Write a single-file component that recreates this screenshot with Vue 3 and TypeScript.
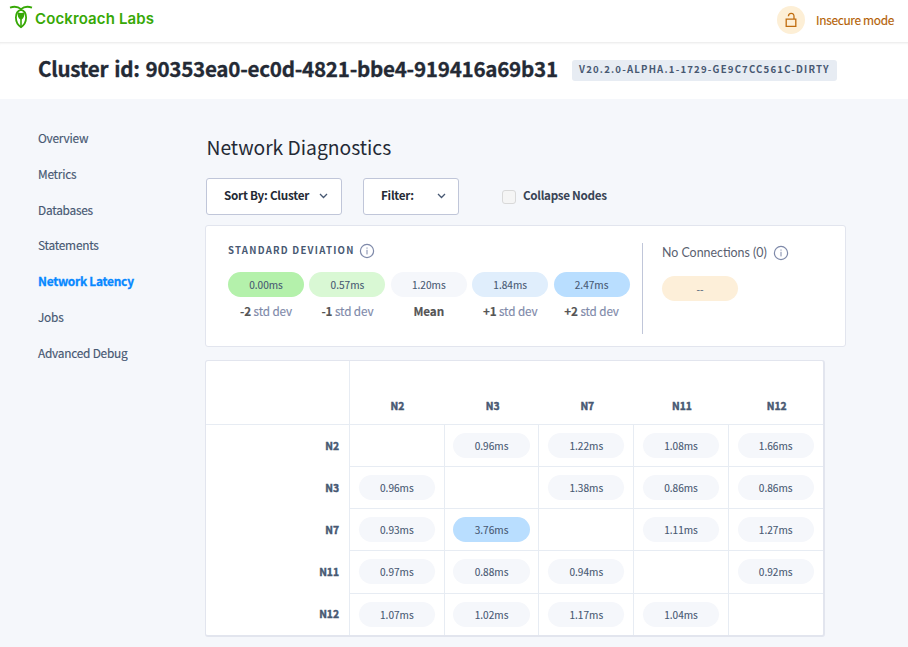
<script setup lang="ts">
interface Deviation {
  value: string
  sign: string
  label: string
  tone: string
}

const navItems: string[] = [
  'Overview',
  'Metrics',
  'Databases',
  'Statements',
  'Network Latency',
  'Jobs',
  'Advanced Debug',
]
const activeItem = 'Network Latency'

const deviations: Deviation[] = [
  { value: '0.00ms', sign: '-2', label: 'std dev', tone: 'green-2' },
  { value: '0.57ms', sign: '-1', label: 'std dev', tone: 'green-1' },
  { value: '1.20ms', sign: 'Mean', label: '', tone: 'neutral' },
  { value: '1.84ms', sign: '+1', label: 'std dev', tone: 'blue-1' },
  { value: '2.47ms', sign: '+2', label: 'std dev', tone: 'blue-2' },
]

const nodes: string[] = ['N2', 'N3', 'N7', 'N11', 'N12']
const latencies: (number | null)[][] = [
  [null, 0.96, 1.22, 1.08, 1.66],
  [0.96, null, 1.38, 0.86, 0.86],
  [0.93, 3.76, null, 1.11, 1.27],
  [0.97, 0.88, 0.94, null, 0.92],
  [1.07, 1.02, 1.17, 1.04, null],
]

const tone = (ms: number): string => (ms > 2.47 ? 'blue-2' : 'neutral')
</script>

<template>
  <div class="page">
    <header class="topbar">
      <div class="brand">
        <svg class="roach" width="24" height="24" viewBox="0 0 24 24" fill="none">
          <path d="M1 2.600C5 1.200 9.400 1.800 12 4.200C14.600 1.800 19 1.200 23 2.600" stroke="#37a806" stroke-width="1.800" />
          <path d="M12 4.800C8.400 5.500 6.900 8.900 6.900 12.600C6.900 16.800 9 20.300 12 22.200C15 20.300 17.100 16.800 17.100 12.600C17.100 8.900 15.600 5.500 12 4.800Z" stroke="#37a806" stroke-width="1.800" />
          <path d="M8.500 7.200C10.500 8.200 13.500 8.200 15.500 7.200C15.700 10.500 14.800 12.900 12.800 14.400V21H11.200V14.400C9.200 12.900 8.300 10.500 8.500 7.200Z" fill="#37a806" />
        </svg>
        <span class="brand-name">Cockroach Labs</span>
      </div>
      <div class="security">
        <span class="lock">
          <svg width="12" height="16" viewBox="0 0 12 16" fill="none" stroke="#c06c0e" stroke-width="1.300">
            <path d="M1.200 7.200H10.800V14.400H1.200Z" />
            <path d="M9 7V4.500C9 2.400 8 1.300 6.200 1.300C4.500 1.300 3.500 2.300 3.400 4.300" />
          </svg>
        </span>
        <span class="security-label">Insecure mode</span>
      </div>
    </header>

    <section class="cluster">
      <h1 class="cluster-title">Cluster id: 90353ea0-ec0d-4821-bbe4-919416a69b31</h1>
      <span class="version">V20.2.0-ALPHA.1-1729-GE9C7CC561C-DIRTY</span>
    </section>

    <div class="body">
      <nav class="nav">
        <a v-for="item in navItems" :key="item" class="nav-item" :class="{ active: item === activeItem }">{{ item }}</a>
      </nav>

      <main class="main">
        <h2 class="heading">Network Diagnostics</h2>

        <div class="controls">
          <button class="select sort">
            <span class="select-label">Sort By: Cluster</span>
            <svg width="9" height="6" viewBox="0 0 9 6" fill="none" stroke="#475872" stroke-width="1.300"><path d="M1 1L4.500 4.500L8 1" /></svg>
          </button>
          <button class="select filter">
            <span class="select-label">Filter:</span>
            <svg width="9" height="6" viewBox="0 0 9 6" fill="none" stroke="#475872" stroke-width="1.300"><path d="M1 1L4.500 4.500L8 1" /></svg>
          </button>
          <label class="collapse"><span class="checkbox"></span><span class="collapse-label">Collapse Nodes</span></label>
        </div>

        <section class="legend">
          <div class="deviation">
            <div class="legend-title">
              <span class="caps">STANDARD DEVIATION</span>
              <svg class="info" width="16" height="16" viewBox="0 0 16 16" fill="none" stroke="#7e89a9"><circle cx="8" cy="8" r="6.600" stroke-width="1.200" /><path d="M8 6.800V11.400M8 4.500V5.700" stroke-width="1" /></svg>
            </div>
            <div class="scale">
              <div v-for="d in deviations" :key="d.sign" class="step">
                <span class="pill" :class="d.tone">{{ d.value }}</span>
                <span class="step-label"><b>{{ d.sign }}</b> {{ d.label }}</span>
              </div>
            </div>
          </div>
          <div class="connections">
            <div class="legend-title">
              <span class="no-conn">No Connections (0)</span>
              <svg class="info" width="16" height="16" viewBox="0 0 16 16" fill="none" stroke="#7e89a9"><circle cx="8" cy="8" r="6.600" stroke-width="1.200" /><path d="M8 6.800V11.400M8 4.500V5.700" stroke-width="1" /></svg>
            </div>
            <span class="pill orange">--</span>
          </div>
        </section>

        <section class="matrix">
          <div class="corner"></div>
          <div v-for="(n, i) in nodes" :key="n" class="col-head" :class="{ first: i === 0 }">{{ n }}</div>
          <template v-for="(row, r) in latencies" :key="nodes[r]">
            <div class="row-head" :class="{ first: r === 0 }">{{ nodes[r] }}</div>
            <div v-for="(ms, c) in row" :key="c" class="cell">
              <span v-if="ms !== null" class="pill" :class="tone(ms)">{{ ms.toFixed(2) }}ms</span>
            </div>
          </template>
        </section>
      </main>
    </div>
  </div>
</template>

<style>
body {
  background: #f5f7fb;
}
</style>

<style scoped>
* {
  box-sizing: border-box;
}
.page {
  height: 647px;
  overflow: hidden;
  background: #f5f7fb;
  color: #475872;
  font-family: "Noto Sans CJK SC", "Noto Sans", sans-serif;
  font-size: 12.500px;
}
.topbar {
  display: flex;
  justify-content: space-between;
  height: 42px;
  padding: 0 14px 0 9px;
  background: #fff;
}
.brand {
  display: flex;
  padding-top: 5px;
}
.brand-name {
  margin: 3px 0 0 2px;
  color: #37a806;
  font: 600 15px/22px Inter, sans-serif;
  letter-spacing: 0.120px;
}
.security {
  display: flex;
  align-items: center;
  height: 39px;
  gap: 11px;
}
.lock {
  display: flex;
  align-items: center;
  justify-content: center;
  width: 28px;
  height: 28px;
  border-radius: 50%;
  background: #fdefd6;
}
.security-label {
  color: #b45f06;
  font-size: 11.900px;
  letter-spacing: -0.320px;
  line-height: 20px;
  -webkit-text-stroke: 0.150px currentColor;
}
.cluster {
  display: flex;
  align-items: flex-start;
  height: 57px;
  padding: 0 38px;
  border-top: 1px solid #efefef;
  box-shadow: inset 0 2px 2px -1px #f5f5f5;
  background: #fff;
}
.cluster-title {
  width: 534px;
  margin: 10px 0 0;
  color: #242a35;
  font-size: 20.600px;
  font-weight: 700;
  letter-spacing: -0.260px;
  word-spacing: 1.500px;
  line-height: 30px;
  white-space: nowrap;
  -webkit-text-stroke: 0.300px currentColor;
}
.version {
  width: 265px;
  height: 21px;
  margin-top: 17px;
  padding-left: 7px;
  border-radius: 3px;
  background: #e7ecf3;
  font-size: 9.600px;
  font-weight: 700;
  letter-spacing: 1.200px;
  line-height: 19px;
  white-space: nowrap;
}
.body {
  display: flex;
}
.nav {
  display: flex;
  flex-direction: column;
  width: 205px;
  padding: 21px 0 0 38px;
}
.nav-item {
  height: 35.830px;
  font-size: 11.900px;
  letter-spacing: -0.250px;
  line-height: 36px;
  -webkit-text-stroke: 0.150px currentColor;
}
.active {
  color: #0788ff;
  font-weight: 700;
  -webkit-text-stroke: 0.300px currentColor;
}
.main {
  flex: none;
  width: 641px;
}
.heading {
  height: 30px;
  margin: 33px 0 16px 1.500px;
  color: #242a35;
  font-size: 19.250px;
  font-weight: 400;
  line-height: 30px;
}
.controls {
  display: flex;
  align-items: center;
  height: 37px;
  margin: 0 0 10px 1px;
}
.select {
  display: flex;
  align-items: center;
  justify-content: space-between;
  height: 37px;
  margin: 0 21px 0 0;
  padding: 0 13px 1px 17px;
  border: 1px solid #c0c6d9;
  border-radius: 3px;
  background: #fff;
  color: #242a35;
  font-family: inherit;
  font-size: 11.700px;
  font-weight: 700;
  letter-spacing: -0.250px;
  line-height: 20px;
  white-space: nowrap;
}
.select-label {
  padding-bottom: 2px;
}
.sort {
  width: 136px;
}
.filter {
  width: 96px;
  margin-right: 43px;
  padding-right: 12px;
}
.collapse {
  display: flex;
  align-items: center;
  gap: 7px;
  color: #394455;
  font-size: 11.700px;
  font-weight: 700;
  letter-spacing: -0.320px;
  line-height: 20px;
}
.collapse-label {
  padding-bottom: 3px;
}
.checkbox {
  width: 14px;
  height: 14px;
  border: 1px solid #d9d9d9;
  border-radius: 3px;
  background: #f5f5f5;
}
.legend {
  display: flex;
  height: 122px;
  margin-bottom: 13px;
  padding: 17px 22px 0;
  border: 1px solid #e2e5ee;
  border-radius: 3px;
  background: #fff;
}
.deviation {
  width: 415px;
  height: 91px;
  border-right: 1px solid #c0c6d9;
}
.legend-title {
  display: flex;
  align-items: center;
  height: 15px;
  gap: 4px;
  white-space: nowrap;
}
.caps {
  font-size: 9.600px;
  font-weight: 700;
  letter-spacing: 1.250px;
  line-height: 15px;
}
.scale {
  display: flex;
  gap: 5.400px;
  margin-top: 14px;
}
.step {
  display: flex;
  flex-direction: column;
  width: 76px;
  text-align: center;
}
.pill {
  display: block;
  width: 76px;
  height: 25px;
  border-radius: 13px;
  color: #475872;
  font-size: 10.100px;
  line-height: 25px;
  text-align: center;
  -webkit-text-stroke: 0.100px currentColor;
}
.step-label {
  margin-top: 4px;
  color: #7e89a9;
  font-size: 11.700px;
  letter-spacing: -0.100px;
  line-height: 20px;
  -webkit-text-stroke: 0.150px currentColor;
}
.step-label b {
  color: #555;
  font-weight: 700;
}
.green-2 {
  background: #b4f1ab;
}
.green-1 {
  background: #d9f8d4;
}
.neutral {
  background: #f5f7fb;
}
.blue-1 {
  background: #e0eefc;
}
.blue-2 {
  background: #b9deff;
}
.orange {
  margin-top: 16px;
  background: #fdefd9;
}
.connections {
  padding: 2px 0 0 19px;
}
.connections .legend-title {
  gap: 6px;
}
.no-conn {
  color: #5a6170;
  font: 400 12.400px/15px Lato, sans-serif;
}
.matrix {
  display: grid;
  grid-template-columns: 143px repeat(5, 94.730px);
  grid-template-rows: 63px repeat(5, 42.150px);
  width: 620px;
  height: 277px;
  border: 1px solid #e2e5ee;
  border-right-width: 2px;
  border-bottom-width: 2px;
  border-radius: 3px;
  background: #fff;
}
.col-head {
  padding: 35px 0 0 3px;
}
.col-head,
.row-head {
  font-size: 10.300px;
  font-weight: 700;
  line-height: 20px;
  text-align: center;
  -webkit-text-stroke: 0.450px currentColor;
}
.row-head {
  padding: 11.600px 10px 0 0;
  text-align: right;
}
.row-head.first {
  padding-top: 11px;
}
.col-head.first {
  padding-left: 1px;
}
.col-head.first,
.cell {
  border-left: 1px solid #e7ecf3;
}
.row-head.first,
.cell {
  border-top: 1px solid #e7ecf3;
}
.cell {
  padding: 8px 0 0 8.740px;
}
.cell .pill {
  width: 76.200px;
}
</style>
